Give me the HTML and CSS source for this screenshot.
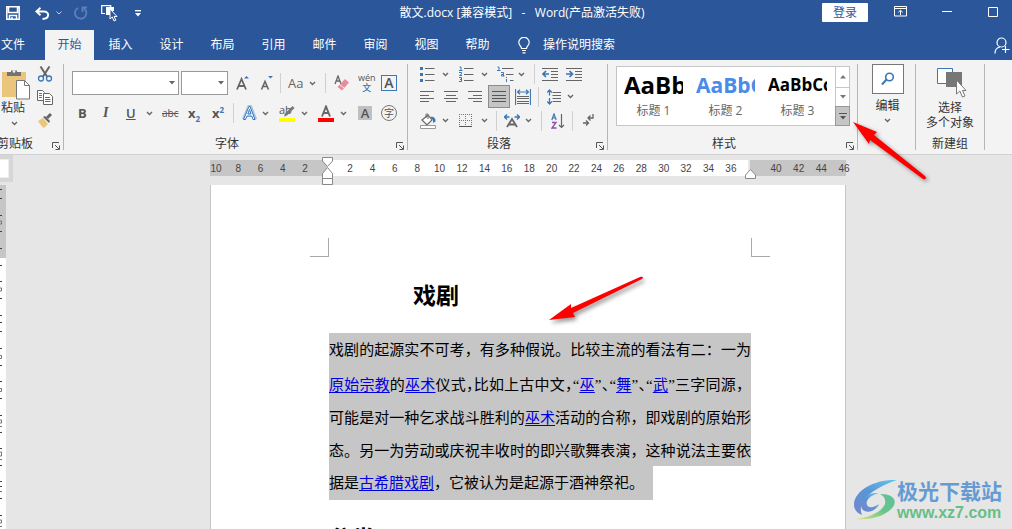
FILE: index.html
```html
<!DOCTYPE html>
<html lang="zh-CN">
<head>
<meta charset="utf-8">
<title>散文.docx - Word</title>
<link rel="stylesheet" href="styles.css">
</head>
<body>
<svg class="defs" aria-hidden="true">
  <symbol id="chev" viewBox="0 0 7 5"><path d="M1 1l2.500 2.500L6 1" fill="none" stroke="#666" stroke-width="1.400"/></symbol>
  <symbol id="launch" viewBox="0 0 8 8"><path d="M.5 6V.5H7M3 3l4 4M7.500 3.500v4h-4" fill="none" stroke="#555"/></symbol>
</svg>
<div class="app">
  <header class="titlebar">
    <div class="quick">
      <button aria-label="保存"><svg width="14" height="14" viewBox="0 0 14 14"><path d="M.8.8h12.400v12.400H.8zM2.500 1v5.500h9V1M3.500 13V9.500h7V13M6 11v2.500" fill="none" stroke="#fff" stroke-width="1.500"/></svg></button>
      <button aria-label="撤销"><svg width="15" height="13" viewBox="0 0 15 13"><path d="M5.500.8L1.300 4.500l4.200 3.700M1.500 4.500H9c5.500 0 6 7-1.500 7.500" fill="none" stroke="#fff" stroke-width="1.900"/></svg></button>
      <button aria-label="撤销选项"><svg width="6" height="4" viewBox="0 0 6 4"><path d="M.5.5L3 3 5.500.5" fill="none" stroke="#c5d3ea"/></svg></button>
      <button aria-label="重做"><svg width="14" height="14" viewBox="0 0 14 14"><path d="M4 2a5.700 5.700 0 1 0 6 .4M8.500 6V1.500H13" fill="none" stroke="#5f7fb5" stroke-width="1.800"/></svg></button>
      <button aria-label="选择对象"><svg width="17" height="17" viewBox="0 0 17 17"><path d="M4 8.500H.7V.7h9V2" fill="none" stroke="#fff" stroke-width="1.200"/><path d="M5 2h8v4h-2L9 4v6H5z" fill="#fff"/><path d="M9 4v10l2.300-2 1.700 4 1.800-.8-1.700-3.700H16z" fill="#2b579a" stroke="#fff"/></svg></button>
      <button aria-label="自定义快速访问工具栏"><svg width="6" height="7" viewBox="0 0 6 7"><path d="M0 .7h6" stroke="#fff" stroke-width="1.400"/><path d="M0 3h6L3 6.500z" fill="#fff"/></svg></button>
    </div>
    <div class="doc-title">散文.docx [兼容模式]&nbsp;&nbsp; -&nbsp;&nbsp; Word(产品激活失败)</div>
    <div class="window">
      <button class="login">登录</button>
      <button aria-label="功能区显示选项"><svg width="13" height="11" viewBox="0 0 13 11"><path d="M.5.500h12v9.500H.5zM.5 2.500h12M6.500 9V4.500M4.300 6.300l2.200-2 2.200 2" fill="none" stroke="#fff"/></svg></button>
      <button aria-label="最小化"><svg width="10" height="10" viewBox="0 0 10 10"><path d="M0 4.500h10" stroke="#fff"/></svg></button>
      <button aria-label="最大化"><svg width="10" height="10" viewBox="0 0 10 10"><path d="M.5.500h9v9h-9z" fill="none" stroke="#fff"/></svg></button>
    </div>
  </header>
  <nav class="tabs">
    <button class="file">文件</button><button class="active">开始</button><button>插入</button><button>设计</button><button>布局</button><button>引用</button><button>邮件</button><button>审阅</button><button>视图</button><button>帮助</button>
    <button class="tell"><svg width="12" height="17" viewBox="0 0 12 17"><path d="M3.500 11.500C3.500 9 .8 8.500.8 5.500a5.200 5.200 0 0 1 10.400 0c0 3-2.700 3.500-2.700 6zM4 13.500h4M4.500 15.800h3" fill="none" stroke="#fff" stroke-width="1.200"/></svg>操作说明搜索</button>
    <button class="share" aria-label="共享"><svg width="16" height="17" viewBox="0 0 16 17"><circle cx="7.500" cy="5.500" r="4.500" fill="none" stroke="#fff" stroke-width="1.200"/><path d="M1 16.500c0-3.500 2-6 5-6.500M11.500 9v7M8 12.500h7.500" fill="none" stroke="#fff" stroke-width="1.200"/></svg></button>
  </nav>

  <div class="ribbon">
    <section class="group clipboard">
      <div class="group-body clip-body">
        <button class="big"><svg width="29" height="31" viewBox="0 0 29 31"><path d="M1 3h24v25H1z" fill="#ecc57c"/><path d="M6 7V3h4V1.500h6V3h4v4z" fill="#737373"/><circle cx="13" cy="2.500" r="1.300" fill="#f3f3f3"/><path d="M15.500 11.500h8l5 5v13.500h-13z" fill="#fff" stroke="#777"/><path d="M23.500 11.500v5h5" fill="none" stroke="#777"/></svg><span>粘贴</span><svg class="chev"><use href="#chev"/></svg></button>
        <div class="mini">
          <button aria-label="剪切"><svg width="16" height="16" viewBox="0 0 16 16"><path d="M3.500.5l6.500 10M12.500.5L6 10.500" stroke="#666" stroke-width="2" fill="none"/><circle cx="4" cy="12.500" r="2.500" fill="none" stroke="#3b76b5" stroke-width="1.300"/><circle cx="12" cy="12.500" r="2.500" fill="none" stroke="#3b76b5" stroke-width="1.300"/></svg></button>
          <button aria-label="复制"><svg width="16" height="15" viewBox="0 0 16 15"><path d="M6 10.500H.5V.5h5l2 2" fill="#fff" stroke="#666"/><path d="M6.500 3.500h6l3 3v8h-9z" fill="#fff" stroke="#666"/><path d="M2 3.500h3M2 5.500h3M2 7.500h3M8 7.500h5M8 9.500h5.500M8 11.500h5.500" stroke="#3b76b5"/></svg></button>
          <button aria-label="格式刷"><svg width="16" height="15" viewBox="0 0 16 15"><path d="M1 8l5-3 5 6-4 4c-2-1-4-4-6-7z" fill="#ecc57c"/><path d="M6 4l2-1 5 5-1 2z" fill="#666"/><path d="M10 5l4-4" stroke="#666" stroke-width="3"/></svg></button>
        </div>
      </div>
      <footer><span>剪贴板</span><button aria-label="剪贴板选项"><svg width="8" height="8"><use href="#launch"/></svg></button></footer>
    </section>

    <section class="group font">
      <div class="group-body">
        <div class="row font-row1">
          <span class="combo combo-font"><select aria-label="字体"><option></option></select><svg width="6" height="4" viewBox="0 0 6 4"><path d="M0 0h6L3 3.500z" fill="#666"/></svg></span>
          <span class="combo combo-size"><select aria-label="字号"><option></option></select><svg width="6" height="4" viewBox="0 0 6 4"><path d="M0 0h6L3 3.500z" fill="#666"/></svg></span>
          <button aria-label="增大字号"><svg width="14" height="16" viewBox="0 0 14 16"><path d="M1 14.500L5.500 4l4.500 10.500M2.500 11h6" fill="none" stroke="#666" stroke-width="1.800"/><path d="M8 3.500L10.500 1 13 3.500z" fill="#3b76b5"/></svg></button>
          <button aria-label="减小字号"><svg width="14" height="16" viewBox="0 0 14 16"><path d="M1.500 14.500l3.500-8 3.500 8M3 11.500h4.500" fill="none" stroke="#666" stroke-width="1.600"/><path d="M8 1h5l-2.500 2.500z" fill="#3b76b5"/></svg></button>
          <i class="sep"></i>
          <button class="t-aa">Aa</button>
          <button aria-label="更改大小写选项"><svg class="chev"><use href="#chev"/></svg></button>
          <i class="sep"></i>
          <button aria-label="清除格式"><svg width="16" height="16" viewBox="0 0 16 16"><path d="M1 9l3-8 3 8M2 6h4" fill="none" stroke="#666" stroke-width="1.300"/><path d="M3.500 12L11 4l4 3.500-7 8z" fill="#e58e9b"/><path d="M5.500 9.500l4.500 3.500" stroke="#fff" stroke-width=".8"/></svg></button>
          <button class="wen"><span>wén</span><b>文</b></button>
          <button class="boxed">A</button>
        </div>
        <div class="row font-row2">
          <button class="t-b">B</button>
          <button class="t-i">I</button>
          <button class="t-u">U</button>
          <button aria-label="下划线选项"><svg class="chev"><use href="#chev"/></svg></button>
          <button class="t-s">abc</button>
          <button class="t-x">x<sub>2</sub></button>
          <button class="t-x">x<sup>2</sup></button>
          <i class="sep"></i>
          <button aria-label="文本效果"><svg width="15" height="16" viewBox="0 0 15 16"><path d="M1.500 14.500L7 1.500l1.500 0 5 13M3.500 10h8" fill="none" stroke="#a9c8e8" stroke-width="3.500"/><path d="M1.500 14.500L7 1.500h1l5 13h-2l-1.200-3.500H5L3.500 14.500zM5.800 9H9L7.500 4.500z" fill="#fff" stroke="#3b76b5"/></svg></button>
          <button aria-label="文本效果选项"><svg class="chev"><use href="#chev"/></svg></button>
          <button class="ink" aria-label="突出显示"><span class="t-ab">ab</span><svg width="16" height="17" viewBox="0 0 16 17"><path d="M5 11.500l1-3L13.500 1l2 2L8 10.500z" fill="#777"/><path d="M0 13h16v4H0z" fill="#ff0"/></svg></button>
          <button aria-label="突出显示选项"><svg class="chev"><use href="#chev"/></svg></button>
          <button aria-label="字体颜色"><svg width="16" height="17" viewBox="0 0 16 17"><path d="M4 11.500L8 1.500l4 10M5.500 8h5" fill="none" stroke="#666" stroke-width="1.900"/><path d="M0 13h16v4H0z" fill="red"/></svg></button>
          <button aria-label="字体颜色选项"><svg class="chev"><use href="#chev"/></svg></button>
          <button class="shade">A</button>
          <button class="circle">字</button>
        </div>
      </div>
      <footer><span>字体</span><button aria-label="字体选项"><svg width="8" height="8"><use href="#launch"/></svg></button></footer>
    </section>

    <section class="group para">
      <div class="group-body">
        <div class="row para-row1">
          <button aria-label="项目符号"><svg width="15" height="16" viewBox="0 0 15 16"><path d="M5 2.500h9.500M5 8.500h9.500M5 14.500h9.500" stroke="#666"/><path d="M0 1h3v3H0zM0 7h3v3H0zM0 13h3v3H0z" fill="#3b76b5"/></svg></button>
          <button aria-label="项目符号选项"><svg class="chev"><use href="#chev"/></svg></button>
          <button aria-label="编号"><svg width="15" height="16" viewBox="0 0 15 16"><path d="M5 2.500h9.500M5 8.500h9.500M5 14.500h9.500" stroke="#666"/><path d="M.5 1H2v3.500M0 4.500h3.500M0 6.500h2.500v1.500L.5 9.500H3M0 11.500h2.500v4H0M1 13.500h1.500" fill="none" stroke="#3b76b5"/></svg></button>
          <button aria-label="编号选项"><svg class="chev"><use href="#chev"/></svg></button>
          <button aria-label="多级列表"><svg width="17" height="16" viewBox="0 0 17 16"><path d="M5 2.500h11.500M9 8.500h7.500M13 14.500h3.500" stroke="#666"/><path d="M.5 1H2v3.500M0 4.500h3.500M4 6.500h2.500v3.500M6.500 8.500H4.500v1.500h3M9.500 11v1M9.500 13v3" fill="none" stroke="#3b76b5"/></svg></button>
          <button aria-label="多级列表选项"><svg class="chev"><use href="#chev"/></svg></button>
          <i class="sep"></i>
          <button aria-label="减少缩进量"><svg width="16" height="14" viewBox="0 0 16 14"><path d="M0 1.500h16M9 4.500h7M9 7.500h7M9 10.500h7M0 13.500h16" stroke="#666"/><path d="M7 7H1M4 4L1 7l3 3" fill="none" stroke="#3b76b5" stroke-width="1.700"/></svg></button>
          <button aria-label="增加缩进量"><svg width="16" height="14" viewBox="0 0 16 14"><path d="M0 1.500h16M9 4.500h7M9 7.500h7M9 10.500h7M0 13.500h16" stroke="#666"/><path d="M0 7h6M3.500 4l3 3-3 3" fill="none" stroke="#3b76b5" stroke-width="1.700"/></svg></button>
        </div>
        <div class="row para-row2">
          <button aria-label="左对齐"><svg width="14" height="12" viewBox="0 0 14 12"><path d="M0 .5h14M0 4.500h9M0 7.500h14M0 10.500h9" stroke="#666"/></svg></button>
          <button aria-label="居中"><svg width="14" height="12" viewBox="0 0 14 12"><path d="M0 .5h14M2 4.500h10M0 7.500h14M2 10.500h10" stroke="#666"/></svg></button>
          <button aria-label="右对齐"><svg width="14" height="12" viewBox="0 0 14 12"><path d="M0 .5h14M5 4.500h9M0 7.500h14M5 10.500h9" stroke="#666"/></svg></button>
          <button class="pressed" aria-label="两端对齐"><svg width="14" height="12" viewBox="0 0 14 12"><path d="M0 .5h14M0 4.500h14M0 7.500h14M0 10.500h14" stroke="#555"/></svg></button>
          <button aria-label="分散对齐"><svg width="16" height="16" viewBox="0 0 16 16"><path d="M.5 0v16M15.500 0v16M2.500 3h11M5 .8L2.500 3 5 5.200M11 .8L13.500 3 11 5.200" fill="none" stroke="#3b76b5" stroke-width="1.200"/><path d="M2 7.500h12M2 9.500h12M2 12.500h12M2 14.500h12" stroke="#666"/></svg></button>
          <i class="sep"></i>
          <button aria-label="行距"><svg width="14" height="16" viewBox="0 0 14 16"><path d="M5.500 3.500H14M5.500 6.500H14M5.500 9.500H14M5.500 12.500H14" stroke="#666"/><path d="M2.500 1v5.500M2.500 9v6M.2 3.500L2.500 1l2.300 2.500M.2 12.500L2.500 15l2.300-2.500" fill="none" stroke="#3b76b5" stroke-width="1.300"/></svg></button>
          <button aria-label="行距选项"><svg class="chev"><use href="#chev"/></svg></button>
        </div>
        <div class="row para-row3">
          <button aria-label="底纹"><svg width="16" height="16" viewBox="0 0 16 16"><path d="M2 7l6-5 4 5-5 5z" fill="#fff" stroke="#666" stroke-width="1.200"/><path d="M6 5V1.500C6 .5 8 .5 8 1.500V6" fill="none" stroke="#666"/><path d="M10 4c3-1 6 1 5.500 4.500L13 10V7z" fill="#3b76b5"/><path d="M.5 12.500h15v3H.5z" fill="#fff" stroke="#999"/></svg></button>
          <button aria-label="底纹选项"><svg class="chev"><use href="#chev"/></svg></button>
          <button aria-label="边框"><svg width="13" height="13" viewBox="0 0 13 13"><path d="M0 .5h13M0 6.500h13M.5 0v12M6.500 0v12M12.500 0v12" stroke="#777" stroke-dasharray="1 1"/><path d="M0 12.500h13" stroke="#555"/></svg></button>
          <button aria-label="边框选项"><svg class="chev"><use href="#chev"/></svg></button>
          <i class="sep"></i>
          <button aria-label="中文版式"><svg width="16" height="14" viewBox="0 0 16 14"><path d="M3 13L8 5l5 8M5 10.500h6" fill="none" stroke="#666" stroke-width="1.800"/><path d="M0 3h5.500M3 .5L.5 3 3 5.500M16 3h-5.500M13 .5L15.500 3 13 5.500" fill="none" stroke="#3b76b5" stroke-width="1.400"/></svg></button>
          <button aria-label="中文版式选项"><svg class="chev"><use href="#chev"/></svg></button>
          <i class="sep"></i>
          <button aria-label="排序"><svg width="14" height="16" viewBox="0 0 14 16"><path d="M.8 7L3 1l2.200 6M1.500 5h3" fill="none" stroke="#3b76b5" stroke-width="1.200"/><path d="M1 9.500h4L1 15h4.500" fill="none" stroke="#8b4fa8" stroke-width="1.300"/><path d="M10.500 1v13.500M8 12l2.500 2.500L13 12" fill="none" stroke="#666" stroke-width="1.200"/></svg></button>
          <i class="sep"></i>
          <button aria-label="显示编辑标记"><svg width="11" height="13" viewBox="0 0 11 13"><path d="M10 0v4H5.500M7.500 1.500L5 4l2.500 2.500M0 9h5M3 6.500L5.500 9 3 11.500" fill="none" stroke="#666" stroke-width="1.300"/></svg></button>
        </div>
      </div>
      <footer><span>段落</span><button aria-label="段落选项"><svg width="8" height="8"><use href="#launch"/></svg></button></footer>
    </section>

    <section class="group styles">
      <div class="group-body">
        <div class="gallery">
          <button class="style"><span class="sample h1">AaBb</span><span>标题 1</span></button>
          <button class="style"><span class="sample h2">AaBbC</span><span>标题 2</span></button>
          <button class="style"><span class="sample h3">AaBbCc</span><span>标题 3</span></button>
          <div class="scroll">
            <button aria-label="上一行"><svg width="6" height="4" viewBox="0 0 6 4"><path d="M0 3.500h6L3 0z" fill="#777"/></svg></button>
            <button aria-label="下一行"><svg width="6" height="4" viewBox="0 0 6 4"><path d="M0 0h6L3 3.500z" fill="#777"/></svg></button>
            <button class="more" aria-label="其他样式"><svg width="8" height="7" viewBox="0 0 8 7"><path d="M0 .5h8" stroke="#555"/><path d="M1 3h6L4 6.500z" fill="#555"/></svg></button>
          </div>
          <svg class="arrow-styles" width="80" height="64" viewBox="0 0 80 64"><path d="M2 2l24 10-3 3 51 41c2 2 1 4-2 3L19 20l-1 4z" fill="#f00"/></svg>
        </div>
      </div>
      <footer><span>样式</span><button aria-label="样式选项"><svg width="8" height="8"><use href="#launch"/></svg></button></footer>
    </section>

    <section class="group edit">
      <button class="big"><span class="find"><svg width="14" height="14" viewBox="0 0 14 14"><circle cx="8.500" cy="5" r="3.800" fill="none" stroke="#3b76b5" stroke-width="1.600"/><path d="M5.500 7.500L1 12.500" stroke="#3b76b5" stroke-width="2"/></svg></span><span>编辑</span><svg class="chev"><use href="#chev"/></svg></button>
    </section>

    <section class="group custom">
      <div class="group-body">
        <button class="big"><svg width="30" height="32" viewBox="0 0 30 32"><path d="M.5 1.500h15v15H.5z" fill="#fff" stroke="#3b76b5"/><path d="M9 5h16v15H9z" fill="#777"/><path d="M19.500 13v14l3.300-3 2.700 6 2.500-1-2.500-5.500H29z" fill="#fff" stroke="#777"/></svg><span>选择</span><span>多个对象</span></button>
      </div>
      <footer><span>新建组</span></footer>
    </section>
  </div>

  <main class="workspace">
    <div class="side">
      <div class="tab-stop"><button aria-label="制表符"></button></div>
      <div class="vruler"><div class="v-margin"></div>
        <svg width="6" height="344" viewBox="0 0 6 344"><path d="M0 4.500h2M0 13.500h2M0 30.500h2M0 46.500h2M0 63.500h2M0 80.500h2M0 96.500h2M0 113.500h2M0 130.500h2M0 137.500h2M0 146.500h2M0 163.500h2M0 180.500h2M0 196.500h2M0 213.500h2M0 230.500h2M0 247.500h2M0 263.500h2M0 280.500h2M0 301.500h2M0 296.500h2M0 313.500h2M0 330.500h2" stroke="#444"/><path d="M0 36h1.500v3H0M0 103h1.500v3H0M0 170.500h1.500v3H0M0 203.500h1.500v3H0M0 235h1.500v3H0M0 241.500h2M0 267h1.500v4H0M0 274.500h2M0 306.500h2M0 335h1.500v3H0M0 341.500h2" fill="none" stroke="#777"/></svg>
      </div>
    </div>
    <div class="canvas">
      <div class="ruler">
        <div class="r-left"><span>10</span><span>8</span><span>6</span><span>4</span><span>2</span></div>
        <div class="r-mid"><span>2</span><span>4</span><span>6</span><span>8</span><span>10</span><span>12</span><span>14</span><span>16</span><span>18</span><span>20</span><span>22</span><span>24</span><span>26</span><span>28</span><span>30</span><span>32</span><span>34</span><span>36</span></div>
        <div class="r-right"><span>40</span><span>42</span><span>44</span><span>46</span></div>
        <svg class="indent-left" width="11" height="28" viewBox="0 0 11 28"><path d="M.5.500h10V4l-5 5.500L.5 4zM.5 21.500v-5L5.500 10.500l5 6v5zM.5 21.500h10v6H.5z" fill="#fff" stroke="#888"/></svg>
        <svg class="indent-right" width="11" height="10" viewBox="0 0 11 10"><path d="M.5 9.500V6l5-5.500 5 5.500v3.500z" fill="#fff" stroke="#888"/></svg>
      </div>
      <article class="page">
        <div class="crops"><i class="crop-l"></i><i class="crop-r"></i></div>
        <div class="text">
          <h1>戏剧</h1>
          <p>
            <span class="line first">戏剧的起源实不可考，有多种假说。比较主流的看法有二：一为</span>
            <span class="line"><a href="#">原始宗教</a>的<a href="#">巫术</a>仪式<i>，</i>比如上古中文<i>，</i><q>“</q><a href="#">巫</a><q>”</q><i>、</i><q>“</q><a href="#">舞</a><q>”</q><i>、</i><q>“</q><a href="#">武</a><q>”</q>三字同源，</span>
            <span class="line">可能是对一种乞求战斗胜利的<a href="#">巫术</a>活动的合称，即戏剧的原始形</span>
            <span class="line">态。另一为劳动或庆祝丰收时的即兴歌舞表演，这种说法主要依</span>
            <span class="line last">据是<a href="#">古希腊戏剧</a>，它被认为是起源于酒神祭祀。</span>
          </p>
          <h2>分类</h2>
        </div>
        <svg class="arrow-text" width="104" height="56" viewBox="0 0 104 56"><path d="M2 45l22-16v4L93 2c3-1 4 1 2 2L26 38l2 4z" fill="#f00"/></svg>
      </article>
    </div>
    <div class="watermark">
      <svg width="44" height="42" viewBox="0 0 44 42"><defs><linearGradient id="wb" x1="1" y1="0" x2="0" y2="1"><stop offset="0" stop-color="#62c8ee"/><stop offset=".5" stop-color="#5b95d4"/><stop offset="1" stop-color="#7585cc"/></linearGradient><linearGradient id="wg" x1="1" y1="0" x2="0" y2="1"><stop offset="0" stop-color="#5cbf9b"/><stop offset=".5" stop-color="#6cc48a"/><stop offset="1" stop-color="#e0e480"/></linearGradient></defs><path d="M44 1C22 0 2 11 1 25c0 6 3 9 8 11-4-9 1-23 35-35z" fill="url(#wb)"/><path d="M9 30c-4-9 4-17 17-16-8 2-14 7-12 12 2 4 8 2 12-1-2 6-12 11-17 5z" fill="url(#wb)"/><path d="M27 15c16 0 19 9 9 17C28 38 17 41 3 40c16-2 26-8 29-15 1-5-1-8-5-10z" fill="url(#wg)"/></svg>
      <div><strong>极光下载站</strong><span>www.xz7.com</span></div>
    </div>
  </main>
</div>
</body>
</html>
```
FILE: styles.css
```css
* { box-sizing: border-box; }
body {
  margin: 0;
  font: 12px/16px "Open Sans", "Noto Sans CJK SC", sans-serif;
  color: #333;
  background: #e6e6e6;
}
button {
  font: inherit;
  color: inherit;
  background: none;
  border: 0;
  padding: 0;
  margin: 0;
  white-space: nowrap;
}
svg { display: block; flex: none; }
.defs { width: 0; height: 0; position: absolute; }
.app { height: 100vh; display: flex; flex-direction: column; overflow: hidden; }

/* title bar */
.titlebar { display: flex; height: 30px; background: #2b579a; color: #fff; flex: none; }
.quick {
  flex: 0 0 222px;
  display: grid;
  grid-template-columns: 29px 21px 18px 27px 34px 10px;
  justify-items: start;
  align-items: center;
  padding: 0 0 4px 6px;
}
.doc-title { flex: 1; text-align: center; line-height: 26px; white-space: nowrap; }
.window {
  flex: 0 0 190px;
  display: grid;
  grid-template-columns: 72px 48px 46px 10px;
  justify-items: start;
  align-items: center;
  padding-bottom: 7px;
}
.login { width: 46px; height: 19px; margin-top: 2px; background: #fff; color: #2b579a; line-height: 18px; border-radius: 1px; }

/* tabs */
.tabs { display: flex; gap: 2px; height: 30px; background: #2b579a; color: #fff; flex: none; }
.tabs button { width: 49px; line-height: 28px; }
.tabs .file { width: 43px; text-align: left; padding-left: 1px; }
.tabs .active { background: #f3f3f3; color: #2b579a; }
.tabs .tell { display: flex; align-items: center; gap: 13px; width: auto; margin-left: 14px; }
.tabs .share { width: auto; margin: 0 2px 0 auto; display: flex; align-items: center; }

/* ribbon */
.ribbon { display: flex; flex: none; height: 95px; padding: 4px 0; background: #f3f3f3; border-bottom: 1px solid #d2d2d2; }
.group { display: flex; flex-direction: column; flex: none; border-right: 1px solid #b5b5b5; }
.group-body { flex: 1; min-height: 0; }
.group footer { display: flex; align-items: flex-end; height: 16px; padding-right: 3px; line-height: 14px; }
.group footer span { flex: 1; text-align: center; padding-right: 6px; }
.chev { width: 7px; height: 5px; }
.row { display: grid; align-items: center; justify-items: start; }
.sep { width: 1px; height: 20px; background: #d0d0d0; }
.big { display: flex; flex-direction: column; align-items: center; }

.clipboard { width: 80px; margin-left: -16px; }
.clip-body { display: grid; grid-template-columns: 36px 16px; padding: 2px 0 0 17px; align-items: start; }
.clip-body .big { align-items: flex-start; width: 29px; padding-top: 3px; }
.clip-body .big .chev { margin: 5px 0 0 10px; }
.mini { display: flex; flex-direction: column; gap: 8px; }

.font { width: 344px; padding-left: 8px; }
.font footer { margin-left: -8px; }
.font-row1 { grid-template-columns: 109px 55px 24px 20px 8px 21px 16px 9px 24px 23px 16px; height: 24px; margin-top: 7px; }
.font-row2 { grid-template-columns: 25px 23px 20px 16px 26px 24px 21px 9px 20px 17px 22px 17px 22px 18px 23px 18px; height: 20px; margin: 8px 0 0 6px; }
.combo { display: grid; align-items: center; justify-items: end; height: 24px; }
.combo > * { grid-area: 1 / 1; }
.combo select { width: 100%; height: 100%; appearance: none; background: #fff; border: 1px solid #999; border-radius: 0; }
.combo svg { margin-right: 4px; pointer-events: none; }
.combo-font { width: 107px; }
.combo-size { width: 47px; }
.t-aa { font-size: 13px; color: #666; }
.wen { display: grid; width: 16px; justify-items: center; font-size: 9px; line-height: 9px; color: #555; }
.wen b { font-weight: 500; color: #3b76b5; line-height: 11px; }
.boxed { width: 16px; height: 16px; border: 1px solid #3b76b5; font-size: 14px; line-height: 14px; font-weight: 600; color: #555; }
.font-row2 button { color: #555; }
.t-b { font-weight: 700; font-size: 13px; }
.t-i { font: italic 14px/16px "Liberation Serif", serif; font-weight: 700; }
.t-u { font-weight: 600; font-size: 13px; text-decoration: underline; }
.t-s { font-size: 10px; text-decoration: line-through; }
.t-x { font-size: 13px; font-weight: 700; }
.t-x sub, .t-x sup { font-size: 8px; line-height: 0; color: #3b76b5; }
.ink { display: grid; }
.ink > * { grid-area: 1 / 1; }
.t-ab { font-size: 11px; line-height: 10px; text-align: left; }
.shade { width: 14px; height: 14px; background: #c0c0c0; font-weight: 600; font-size: 13px; line-height: 14px; }
.circle { width: 16px; height: 16px; border: 1px solid #777; border-radius: 50%; font-size: 10px; line-height: 13px; }

.para { width: 200px; padding-left: 12px; }
.para footer { margin-left: -12px; }
.para .group-body { display: grid; grid-template-rows: 19px 27px 21px; align-content: start; }
.para-row1 { grid-template-columns: 22px 17px 22px 16px 21px 16px 8px 24px 16px; }
.para-row2 { grid-template-columns: 24px 24px 20px 27px 23px 9px 20px 10px; }
.para-row3 { grid-template-columns: 22px 17px 22px 15px 8px 21px 16px 10px 21px 11px 12px; }
.pressed { display: grid; place-items: center; width: 22px; height: 23px; background: #c5c5c5; border: 1px solid #8c8c8c; }

.styles { width: 250px; }
.gallery { display: flex; position: relative; height: 60px; margin: 2px 7px 0 8px; background: #fff; border: 1px solid #c6c6c6; }
.style { width: 72px; flex: none; display: flex; flex-direction: column; text-align: center; color: #666; padding: 0 6px 6px 7px; }
.style span { display: block; width: 100%; }
.style .sample { height: 36px; line-height: 36px; overflow: hidden; text-align: left; color: #000; font-family: "Open Sans", sans-serif; font-weight: 700; }
.style .h1 { font-size: 24px; }
.style .h2 { font-size: 21px; color: #4a8ae8; }
.style .h3 { font-size: 17px; }
.scroll { margin: -1px -1px -1px auto; width: 15px; display: grid; grid-template-rows: 21px 19px 20px; }
.scroll button { display: grid; place-items: center; border: 1px solid #c6c6c6; border-bottom-width: 0; }
.scroll .more { background: #c5c5c5; border: 1px solid #999; }
.arrow-styles { position: absolute; left: 234px; top: 53px; z-index: 2; filter: drop-shadow(2px 2px 2px #0006); }

.edit { width: 58px; padding-left: 2px; }
.find { display: grid; place-items: center; width: 32px; height: 30px; margin-bottom: 4px; background: #fff; border: 1px solid #777; }
.edit .chev { margin-top: 4px; }
.custom { width: 69px; }
.custom .big { width: 100%; line-height: 15px; padding-top: 3px; }
.custom .big svg { margin: 0 0 1px 3px; }
.custom footer { padding: 0; }
.custom footer span { padding: 0; }
.group footer span { line-height: 13px; align-self: flex-end; }

/* workspace */
.workspace { position: relative; flex: 1; min-height: 0; display: flex; overflow: hidden; }
.side { flex: 0 0 13px; }
.tab-stop { height: 27px; margin-bottom: 3px; padding: 4px 4px 5px 0; background: #d6d6d6; }
.tab-stop button { display: block; width: 9px; height: 19px; background: #fff; border: 1px solid #eee; border-left: 0; }
.vruler { display: grid; width: 6px; background: #fff; }
.vruler > * { grid-area: 1 / 1; }
.v-margin { height: 73px; background: #c6c6c6; }
.canvas { flex: 1; display: flex; flex-direction: column; align-items: center; padding: 5px 0 0 31px; }
.ruler { position: relative; display: flex; width: 100%; max-width: 636px; height: 16px; margin-bottom: 9px; flex: none; font: 10px/17px "Liberation Sans", sans-serif; color: #444; }
.ruler span { width: 12px; text-align: center; }
.ruler > div { display: flex; justify-content: space-between; }
.r-left { flex: 0 0 117px; padding-right: 16px; background: #c6c6c6; }
.ruler .r-mid { flex: 1; padding: 0 11px 0 17px; margin-right: 2px; background: #fff; }
.ruler .r-right { flex: 0 0 96px; padding-left: 20px; background: #c6c6c6; }
.r-right span { flex: 0 0 auto; }
.r-right span:last-child { margin-right: -4px; }
.indent-left { position: absolute; left: 112px; top: -3px; }
.indent-right { position: absolute; right: 90px; top: 9px; }
.page { position: relative; flex: 1 0 auto; width: 100%; max-width: 636px; background: #fff; border: solid #c6c6c6; border-width: 0 1px; }
.crops { display: flex; justify-content: space-between; padding: 53px 75px 0 99px; }
.crops i { width: 19px; height: 19px; border-bottom: 1px solid #aaa; }
.crop-l { border-right: 1px solid #aaa; }
.crop-r { border-left: 1px solid #aaa; }
.text { padding: 0 94px 0 118px; color: #000; }
h1, h2 { margin: 0; font: 700 23px/34px "Noto Sans CJK SC", sans-serif; }
h1 { padding: 20px 0 22px 84px; }
h2 { padding-top: 20px; }
p { margin: 0; font: 15px/33px "Noto Sans CJK SC", sans-serif; }
.line { display: block; background: #c6c6c6; white-space: nowrap; text-align: justify; text-align-last: justify; }
.first, .last { line-height: 32px; padding-bottom: 2px; }
.last { width: max-content; padding-right: 9px; text-align-last: left; }
.line a { color: #0000e0; text-underline-offset: 2px; }
.line i { font-style: normal; font-feature-settings: "halt"; }
.line q { quotes: none; font-family: "Liberation Serif", serif; line-height: 15px; }
.line q::before, .line q::after { content: none; }
.arrow-text { position: absolute; left: 336px; top: 90px; filter: drop-shadow(2px 3px 2px #0006); }
.watermark { position: absolute; right: 10px; bottom: 6px; display: flex; align-items: center; }
.watermark strong { display: block; font: 700 21px/26px "Noto Sans CJK SC", sans-serif; color: #659bd3; }
.watermark span { display: block; font: 700 16px/20px "Liberation Sans", sans-serif; color: #68be86; }
```
